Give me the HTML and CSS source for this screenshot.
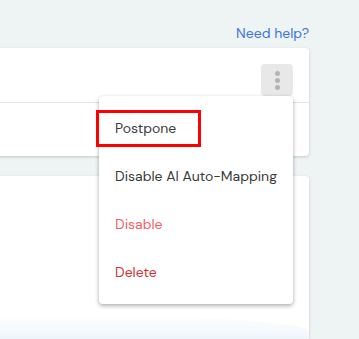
FILE: index.html
```html
<!DOCTYPE html>
<html lang="en">
<head>
    <meta charset="UTF-8">
    <meta name="viewport" content="width=device-width, initial-scale=1.0">
    <title>Mapping</title>
    <link rel="stylesheet" href="styles.css">
</head>
<body>
    <div class="page">
        <div class="help-row">
            <a href="#" class="help-link">Need help?</a>
        </div>
        <div class="card card-top">
            <div class="card-head">
                <div class="kebab-wrap">
                    <button class="kebab" type="button" aria-label="More">
                        <span class="dot"></span>
                        <span class="dot"></span>
                        <span class="dot"></span>
                    </button>
                    <!-- menu opened from the kebab -->
                    <div class="menu">
                        <div class="menu-item">Postpone</div>
                        <div class="menu-item">Disable AI Auto-Mapping</div>
                        <div class="menu-item warn">Disable</div>
                        <div class="menu-item danger">Delete</div>
                        <div class="highlight"></div>
                    </div>
                </div>
            </div>
            <div class="card-body"></div>
        </div>
        <div class="card card-bottom">
            <div class="card-fade"></div>
        </div>
    </div>
</body>
</html>
```

FILE: styles.css
```css
body {
    margin: 0;
    background-color: #eef3f4;
    font-family: "DM Sans", Roboto, "Noto Sans", sans-serif;
    overflow: hidden;
}
.page {
    margin-left: -10px;
    width: 319px;
    padding-top: 24px;
}
.help-row {
    display: flex;
    justify-content: flex-end;
    height: 24px;
}
.help-link {
    color: #3b74dc;
    font-size: 14px;
    text-decoration: none;
    line-height: 18px;
}
.card {
    background-color: white;
    border-radius: 4px;
    box-shadow: 0 1px 3px rgba(0,0,0,0.18);
}
.card-top {
    height: 108px;
    display: flex;
    flex-direction: column;
}
.card-head {
    height: 55px;
    display: flex;
    justify-content: flex-end;
    align-items: flex-start;
    padding: 16px 16px 0 0;
    box-sizing: border-box;
    border-bottom: 1px solid #e4e4e4;
}
.card-body {
    flex: 1;
}
.kebab-wrap {
    position: relative;
}
.kebab {
    width: 32px;
    height: 32px;
    border: none;
    border-radius: 4px;
    background-color: #e8e8e8;
    display: flex;
    flex-direction: column;
    align-items: center;
    justify-content: center;
    gap: 2px;
    padding: 0;
}
.dot {
    width: 5px;
    height: 5px;
    border-radius: 50%;
    background-color: #b3b3b3;
}
.menu {
    position: absolute;
    top: 100%;
    right: 0;
    width: 194px;
    padding: 8px 0;
    background-color: white;
    border-radius: 4px;
    box-shadow: 0 2px 4px rgba(0,0,0,0.3), 0 0 2px rgba(0,0,0,0.08);
    z-index: 2;
}
.menu-item {
    height: 48px;
    display: flex;
    align-items: center;
    padding-left: 16px;
    font-size: 14px;
    color: #3a3a3a;
}
.menu-item.warn {
    color: #f06262;
}
.menu-item.danger {
    color: #cf3434;
}
.highlight {
    position: absolute;
    left: -3px;
    top: 14px;
    width: 105px;
    height: 37px;
    border: 3px solid #ff0000;
    box-sizing: border-box;
}
.card-bottom {
    margin-top: 20px;
    height: 163px;
    border-radius: 4px 4px 0 0;
    position: relative;
    overflow: hidden;
}
.card-fade {
    position: absolute;
    left: 0;
    right: 0;
    bottom: 0;
    height: 24px;
    background: linear-gradient(to bottom, rgba(255,255,255,0), #eef6fc);
    border-radius: 0 70% 0 0;
}
```
